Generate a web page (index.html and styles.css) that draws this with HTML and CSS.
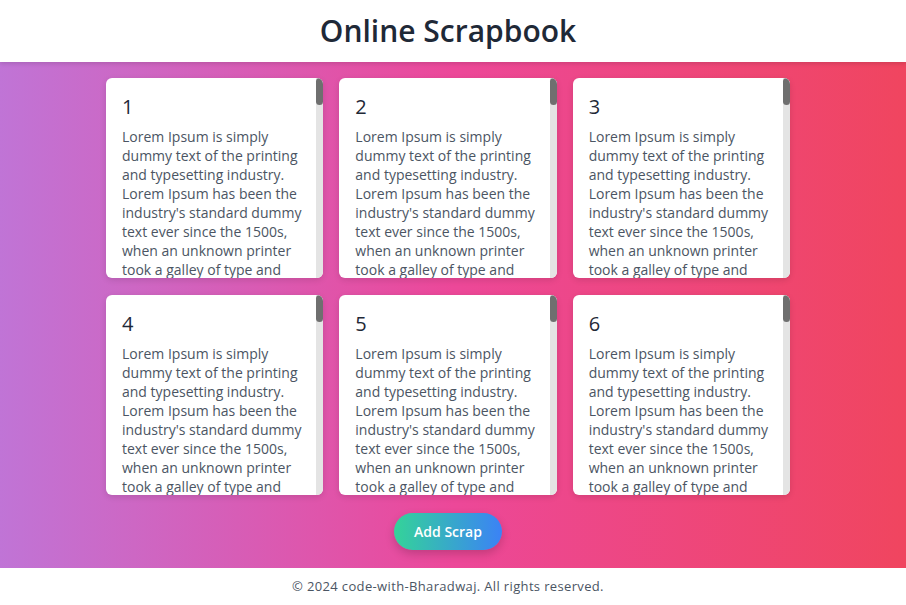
FILE: index.html
```html
<!DOCTYPE html>
<html lang="en">
<head>
<meta charset="utf-8">
<title>Online Scrapbook</title>
<link rel="stylesheet" href="styles.css">
</head>
<body>
<header class="site-header">
  <h1 class="site-title">Online Scrapbook</h1>
</header>
<main class="board">
  <div class="board-inner">
    <div class="scrap-grid">
      <article class="scrap"><div class="scrap-body"><h2 class="scrap-title">1</h2><p class="scrap-text">Lorem Ipsum is simply dummy text of the printing and typesetting industry. Lorem Ipsum has been the industry's standard dummy text ever since the 1500s, when an unknown printer took a galley of type and scrambled it to make a type specimen book. It has survived not only five centuries, but also the leap into electronic typesetting, remaining essentially unchanged. It was popularised in the 1960s with the release of Letraset sheets containing Lorem Ipsum passages, and more recently with desktop publishing software like Aldus PageMaker including versions of Lorem Ipsum.</p></div><span class="scrollbar"><span class="scroll-thumb"></span></span></article>
      <article class="scrap"><div class="scrap-body"><h2 class="scrap-title">2</h2><p class="scrap-text">Lorem Ipsum is simply dummy text of the printing and typesetting industry. Lorem Ipsum has been the industry's standard dummy text ever since the 1500s, when an unknown printer took a galley of type and scrambled it to make a type specimen book. It has survived not only five centuries, but also the leap into electronic typesetting, remaining essentially unchanged. It was popularised in the 1960s with the release of Letraset sheets containing Lorem Ipsum passages, and more recently with desktop publishing software like Aldus PageMaker including versions of Lorem Ipsum.</p></div><span class="scrollbar"><span class="scroll-thumb"></span></span></article>
      <article class="scrap"><div class="scrap-body"><h2 class="scrap-title">3</h2><p class="scrap-text">Lorem Ipsum is simply dummy text of the printing and typesetting industry. Lorem Ipsum has been the industry's standard dummy text ever since the 1500s, when an unknown printer took a galley of type and scrambled it to make a type specimen book. It has survived not only five centuries, but also the leap into electronic typesetting, remaining essentially unchanged. It was popularised in the 1960s with the release of Letraset sheets containing Lorem Ipsum passages, and more recently with desktop publishing software like Aldus PageMaker including versions of Lorem Ipsum.</p></div><span class="scrollbar"><span class="scroll-thumb"></span></span></article>
      <article class="scrap"><div class="scrap-body"><h2 class="scrap-title">4</h2><p class="scrap-text">Lorem Ipsum is simply dummy text of the printing and typesetting industry. Lorem Ipsum has been the industry's standard dummy text ever since the 1500s, when an unknown printer took a galley of type and scrambled it to make a type specimen book. It has survived not only five centuries, but also the leap into electronic typesetting, remaining essentially unchanged. It was popularised in the 1960s with the release of Letraset sheets containing Lorem Ipsum passages, and more recently with desktop publishing software like Aldus PageMaker including versions of Lorem Ipsum.</p></div><span class="scrollbar"><span class="scroll-thumb"></span></span></article>
      <article class="scrap"><div class="scrap-body"><h2 class="scrap-title">5</h2><p class="scrap-text">Lorem Ipsum is simply dummy text of the printing and typesetting industry. Lorem Ipsum has been the industry's standard dummy text ever since the 1500s, when an unknown printer took a galley of type and scrambled it to make a type specimen book. It has survived not only five centuries, but also the leap into electronic typesetting, remaining essentially unchanged. It was popularised in the 1960s with the release of Letraset sheets containing Lorem Ipsum passages, and more recently with desktop publishing software like Aldus PageMaker including versions of Lorem Ipsum.</p></div><span class="scrollbar"><span class="scroll-thumb"></span></span></article>
      <article class="scrap"><div class="scrap-body"><h2 class="scrap-title">6</h2><p class="scrap-text">Lorem Ipsum is simply dummy text of the printing and typesetting industry. Lorem Ipsum has been the industry's standard dummy text ever since the 1500s, when an unknown printer took a galley of type and scrambled it to make a type specimen book. It has survived not only five centuries, but also the leap into electronic typesetting, remaining essentially unchanged. It was popularised in the 1960s with the release of Letraset sheets containing Lorem Ipsum passages, and more recently with desktop publishing software like Aldus PageMaker including versions of Lorem Ipsum.</p></div><span class="scrollbar"><span class="scroll-thumb"></span></span></article>
    </div>
    <button class="add-btn" type="button">Add Scrap</button>
  </div>
</main>
<footer class="site-footer">
  <p class="footer-text">© 2024 code-with-Bharadwaj. All rights reserved.</p>
</footer>
</body>
</html>
```
FILE: styles.css
```css
* { box-sizing: border-box; }
html, body { height: 100%; }
body {
  margin: 0;
  display: flex;
  flex-direction: column;
  font-family: "Open Sans", "Noto Sans", sans-serif;
  background: #ffffff;
}
.site-header {
  height: 63px;
  background: #ffffff;
  display: flex;
  align-items: center;
  justify-content: center;
  padding-right: 10px;
  box-shadow: 0 2px 4px rgba(0,0,0,0.12);
  position: relative;
  z-index: 1;
}
.site-title {
  margin: 0;
  font-size: 30px;
  font-weight: 600;
  color: #1f2937;
  line-height: 1;
}
.board {
  flex: 1;
  background: linear-gradient(to right, #c074d6 0%, #ec4899 50%, #f0455f 100%);
  padding: 16px 10px 18px 0;
  display: flex;
  justify-content: center;
}
.board-inner {
  width: 684px;
  display: flex;
  flex-direction: column;
  align-items: center;
}
.scrap-grid {
  display: grid;
  grid-template-columns: repeat(3, 1fr);
  grid-auto-rows: 200px;
  gap: 17px 16px;
  width: 100%;
}
.scrap {
  position: relative;
  background: #ffffff;
  border-radius: 6px;
  overflow: hidden;
  box-shadow: 0 2px 6px rgba(0,0,0,0.12);
}
.scrap-body {
  padding: 16px 18px 16px 16px;
}
.scrollbar {
  position: absolute;
  top: 0;
  right: 0;
  bottom: 0;
  width: 7px;
  background: #e4e4e4;
}
.scroll-thumb {
  position: absolute;
  top: 0;
  left: 0;
  width: 7px;
  height: 27px;
  background: #6f6f6f;
  border-radius: 4px;
}
.scrap-title {
  margin: 0 0 7px;
  font-size: 20px;
  font-weight: 500;
  line-height: 26px;
  color: #1f2937;
}
.scrap-text {
  margin: 0;
  font-size: 14px;
  line-height: 19px;
  color: #4b5563;
}
.add-btn {
  margin-top: 18px;
  height: 37px;
  padding: 0 20px;
  border: none;
  border-radius: 999px;
  background: linear-gradient(to right, #34d399, #3b82f6);
  color: #ffffff;
  font-family: inherit;
  font-size: 14px;
  font-weight: 600;
  box-shadow: 0 4px 10px rgba(0,0,0,0.18);
  cursor: pointer;
}
.site-footer {
  height: 38px;
  display: flex;
  align-items: center;
  justify-content: center;
  padding-right: 10px;
  background: #ffffff;
}
.footer-text {
  margin: 0;
  font-size: 13px;
  letter-spacing: 0.35px;
  color: #4b5563;
}
```
